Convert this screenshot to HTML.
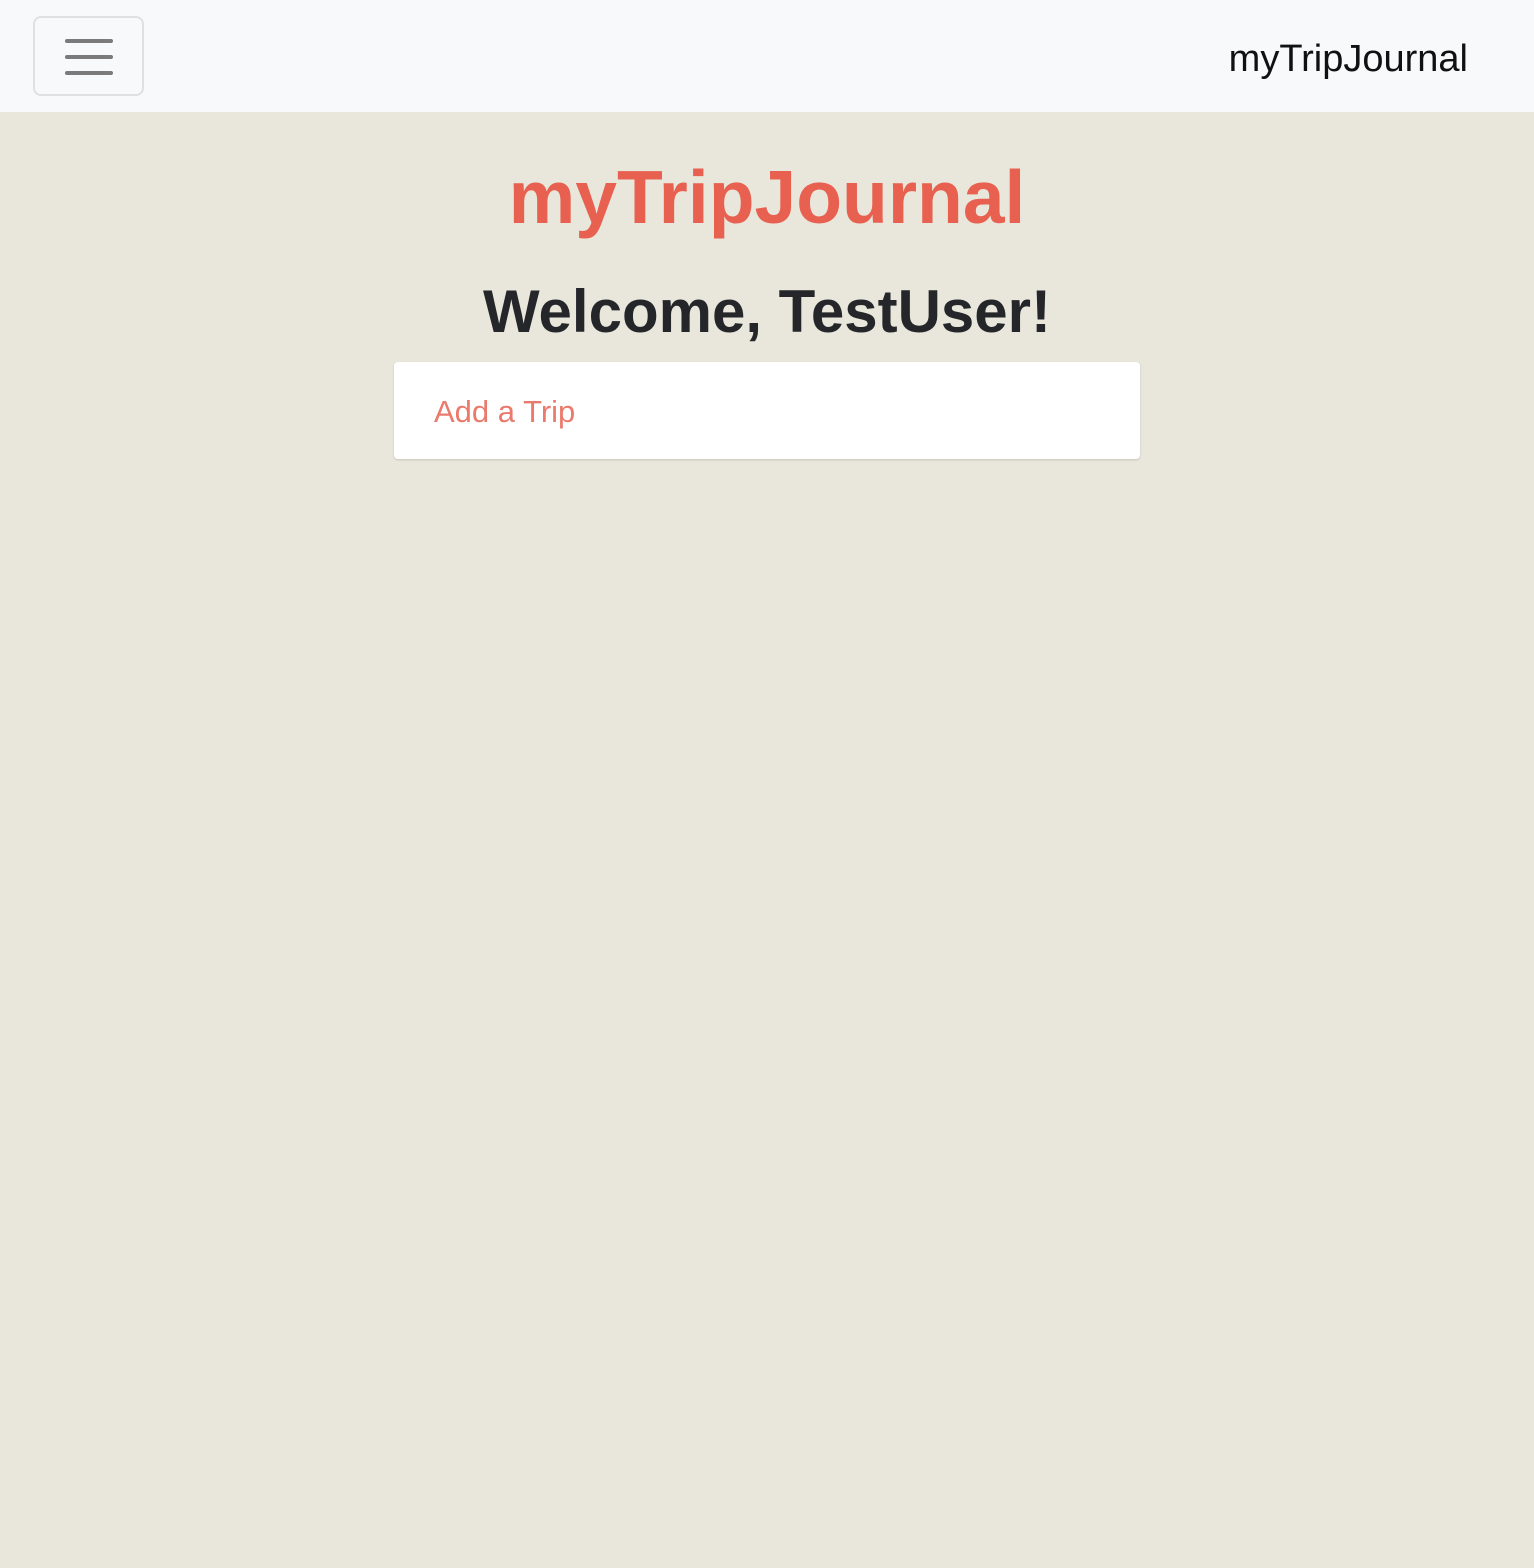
<!DOCTYPE html>
<html><head><meta charset="utf-8"><style>
*{margin:0;padding:0;box-sizing:border-box}
html,body{width:1534px;height:1568px;background:#e9e7dc;font-family:"Liberation Sans",sans-serif;overflow:hidden}
.nav{position:absolute;left:0;top:0;width:1534px;height:112px;background:#f8f9fa}
.tog{position:absolute;left:33px;top:16px;width:111px;height:80px;border:2px solid #dfe0e2;border-radius:8px}
.tog i{position:absolute;left:30px;width:48px;height:4px;border-radius:2px;background:#7b7b7b}
.brand{position:absolute;right:66px;top:38px;font-size:38px;color:#111}
h1{position:absolute;left:0;width:1534px;top:154px;text-align:center;font-size:75px;font-weight:bold;color:#e8604f}
h2{position:absolute;left:0;width:1534px;top:277px;text-align:center;font-size:60px;font-weight:bold;color:#24262a}
.card{position:absolute;left:394px;top:362px;width:746px;height:97px;background:#fff;border-radius:4px;box-shadow:0 1px 2px rgba(0,0,0,.15)}
.card span{position:absolute;left:40px;top:32px;font-size:31px;color:#ea7a6c}
</style></head><body>
<div class="nav"><div class="tog"><i style="top:21px"></i><i style="top:37px"></i><i style="top:53px"></i></div>
<div class="brand">myTripJournal</div></div>
<h1>myTripJournal</h1>
<h2>Welcome, TestUser!</h2>
<div class="card"><span>Add a Trip</span></div>
</body></html>
